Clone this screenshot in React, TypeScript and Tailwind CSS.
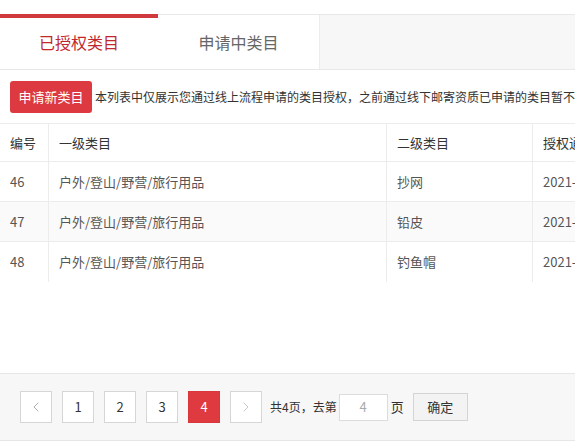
import React from "react";
import { ChevronLeft, ChevronRight } from "lucide-react";

const rows = [
  { id: 46, first: "户外/登山/野营/旅行用品", second: "抄网", date: "2021-03-12", striped: false },
  { id: 47, first: "户外/登山/野营/旅行用品", second: "铅皮", date: "2021-03-12", striped: true },
  { id: 48, first: "户外/登山/野营/旅行用品", second: "钓鱼帽", date: "2021-03-12", striped: false },
];

const font = { fontFamily: '"Noto Sans CJK SC", "Liberation Sans", sans-serif' };

function PageButton({ children, active }: { children: React.ReactNode; active?: boolean }) {
  return (
    <div
      className={`flex h-8 w-8 items-center justify-center border text-[13px] ${
        active
          ? "border-[#d9363e] bg-[#df3a3f] text-white"
          : "border-[#d6d6d6] bg-white text-[#333]"
      }`}
    >
      {children}
    </div>
  );
}

export default function App() {
  return (
    <div className="h-[441px] w-[575px] overflow-hidden bg-white" style={font}>
      <div className="h-[14px]" />
      {/* tabs */}
      <div className="flex h-[56px] border-y border-[#e8e8e8] bg-[#f7f7f7]">
        <div className="relative -mt-px flex w-[158px] items-center justify-center bg-white text-[16px] text-[#c1272d]">
          <div className="absolute left-0 right-0 top-0 h-[4px] bg-[#d0393e]" />
          已授权类目
        </div>
        <div className="flex w-[162px] items-center justify-center border-r border-[#ececec] bg-white text-[16px] text-[#666]">
          申请中类目
        </div>
      </div>
      {/* toolbar */}
      <div className="flex h-[54px] items-center whitespace-nowrap border-b border-[#ececec] pl-[10px]">
        <button className="h-[32px] w-[82px] shrink-0 rounded-[3px] bg-[#dc3a40] text-[13px] text-white">
          申请新类目
        </button>
        <span className="ml-[3px] text-[12px] text-[#333]">
          本列表中仅展示您通过线上流程申请的类目授权，之前通过线下邮寄资质已申请的类目暂不在此展示
        </span>
      </div>
      {/* table */}
      <div className="h-[249px] overflow-hidden">
        <div className="flex h-[38px] items-center border-b border-[#ececec] text-[13px] text-[#333]">
          <div className="flex h-full w-[49px] shrink-0 items-center border-r border-[#ececec] pl-[10px]">编号</div>
          <div className="flex h-full w-[338px] shrink-0 items-center border-r border-[#ececec] pl-[10px]">一级类目</div>
          <div className="flex h-full w-[146px] shrink-0 items-center border-r border-[#ececec] pl-[10px]">二级类目</div>
          <div className="flex h-full w-[120px] shrink-0 items-center whitespace-nowrap pl-[10px]">授权通过时间</div>
        </div>
        {rows.map((r) => (
          <div
            key={r.id}
            className={`flex h-[40px] items-center text-[13px] text-[#555] ${
              r.striped ? "bg-[#fafafa]" : "bg-white"
            } ${r.id !== 48 ? "border-b border-[#ececec]" : ""}`}
          >
            <div className="flex h-full w-[49px] shrink-0 items-center border-r border-[#ececec] pl-[10px]">{r.id}</div>
            <div className="flex h-full w-[338px] shrink-0 items-center border-r border-[#ececec] pl-[10px]">{r.first}</div>
            <div className="flex h-full w-[146px] shrink-0 items-center border-r border-[#ececec] pl-[10px]">{r.second}</div>
            <div className="flex h-full w-[120px] shrink-0 items-center whitespace-nowrap pl-[10px]">{r.date}</div>
          </div>
        ))}
      </div>
      {/* pagination */}
      <div className="flex h-[68px] items-center border-y border-[#e6e6e6] bg-[#f7f7f7] pl-[20px] text-[12px] text-[#333]">
        <div className="flex items-center gap-[10px]">
          <PageButton>
            <ChevronLeft className="h-4 w-4 text-[#999]" strokeWidth={1.2} />
          </PageButton>
          <PageButton>1</PageButton>
          <PageButton>2</PageButton>
          <PageButton>3</PageButton>
          <PageButton active>4</PageButton>
          <PageButton>
            <ChevronRight className="h-4 w-4 text-[#bbb]" strokeWidth={1.2} />
          </PageButton>
        </div>
        <span className="ml-[8px]">共4页，去第</span>
        <div className="ml-[2px] flex h-[27px] w-[49px] items-center justify-center border border-[#dcdcdc] bg-white text-[13px] text-[#aaa]">
          4
        </div>
        <span className="ml-[3px] text-[13px]">页</span>
        <button className="ml-[9px] h-[28px] w-[55px] border border-[#d4d4d4] bg-[#f3f3f3] text-[13px] text-[#333]">
          确定
        </button>
      </div>
    </div>
  );
}
